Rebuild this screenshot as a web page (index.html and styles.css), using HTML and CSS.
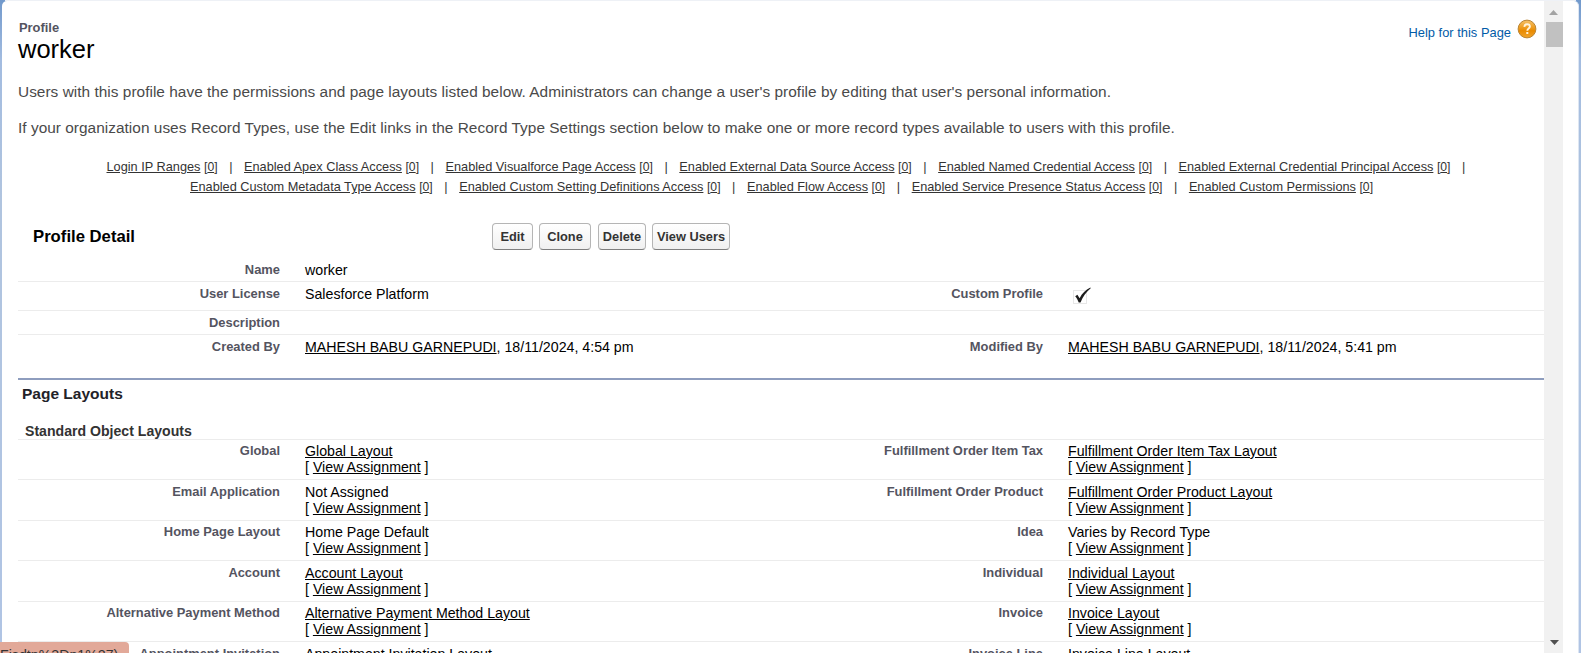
FILE: index.html
```html
<!DOCTYPE html>
<html lang="en">
<head>
<meta charset="utf-8">
<title>Profile: worker</title>
<link rel="stylesheet" href="styles.css">
</head>
<body>
<div class="frame">
  <main class="content">
    <header class="head">
      <div>
        <div class="kind">Profile</div>
        <h1 class="title">worker</h1>
      </div>
      <a class="help"><span>Help for this Page</span>
        <svg width="20" height="20" viewBox="0 0 20 20">
          <defs><linearGradient id="g" x1="0" y1="0" x2="0" y2="1"><stop offset="0" stop-color="#f5c26a"/><stop offset=".45" stop-color="#ee9a1a"/><stop offset=".6" stop-color="#e98a00"/><stop offset="1" stop-color="#f2a52c"/></linearGradient></defs>
          <circle cx="10" cy="10" r="8.9" fill="url(#g)" stroke="#b98434" stroke-width="1"/>
          <path d="M7.300 7.900C7.400 6 8.500 5.200 10.100 5.200c1.600 0 2.800.9 2.800 2.400 0 2-2.600 2-2.600 4.100" fill="none" stroke="#fff4dc" stroke-width="1.900"/>
          <rect x="9.300" y="13" width="2" height="2" fill="#fff4dc"/>
        </svg>
      </a>
    </header>
    <p class="intro">Users with this profile have the permissions and page layouts listed below. Administrators can change a user's profile by editing that user's personal information.</p>
    <p class="intro">If your organization uses Record Types, use the Edit links in the Record Type Settings section below to make one or more record types available to users with this profile.</p>
    <nav class="links">
      <div class="linkrow first">
        <a><u>Login IP Ranges</u> <small>[<u>0</u>]</small></a><i>|</i>
        <a><u>Enabled Apex Class Access</u> <small>[<u>0</u>]</small></a><i>|</i>
        <a><u>Enabled Visualforce Page Access</u> <small>[<u>0</u>]</small></a><i>|</i>
        <a><u>Enabled External Data Source Access</u> <small>[<u>0</u>]</small></a><i>|</i>
        <a><u>Enabled Named Credential Access</u> <small>[<u>0</u>]</small></a><i>|</i>
        <a><u>Enabled External Credential Principal Access</u> <small>[<u>0</u>]</small></a><i>|</i>
      </div>
      <div class="linkrow second">
        <a><u>Enabled Custom Metadata Type Access</u> <small>[<u>0</u>]</small></a><i>|</i>
        <a><u>Enabled Custom Setting Definitions Access</u> <small>[<u>0</u>]</small></a><i>|</i>
        <a><u>Enabled Flow Access</u> <small>[<u>0</u>]</small></a><i>|</i>
        <a><u>Enabled Service Presence Status Access</u> <small>[<u>0</u>]</small></a><i>|</i>
        <a><u>Enabled Custom Permissions</u> <small>[<u>0</u>]</small></a>
      </div>
    </nav>
    <div class="bar">
      <h2 class="bartitle">Profile Detail</h2>
      <button class="btn edit">Edit</button><button class="btn clone">Clone</button><button class="btn delete">Delete</button><button class="btn view">View Users</button>
    </div>
    <section class="detail">
      <div class="row name"><b>Name</b><span>worker</span></div>
      <div class="row license"><b>User License</b><span>Salesforce Platform</span><b>Custom Profile</b><span>
        <svg class="check" width="21" height="18" viewBox="0 0 21 18"><path d="M1.500 3.500h13v13h-13z" fill="none" stroke="#cfcfcf" stroke-dasharray="1 1"/><path d="M3.200 9.200 5.400 7.800 7.600 11.300C10 6.600 13.500 2.800 18.400.6L18.700 1.200C14.200 4.800 10.900 9.400 8.500 15.400L6.700 15.500C5.800 13 4.600 10.800 3.200 9.200z" fill="#1c1c1c"/></svg></span></div>
      <div class="row desc"><b>Description</b></div>
      <div class="row created"><b>Created By</b><span><u>MAHESH BABU GARNEPUDI</u>, 18/11/2024, 4:54 pm</span><b>Modified By</b><span><u>MAHESH BABU GARNEPUDI</u>, 18/11/2024, 5:41 pm</span></div>
    </section>
    <h3 class="section">Page Layouts</h3>
    <h4 class="group">Standard Object Layouts</h4>
    <section class="layouts">
      <div class="row short"><b>Global</b><span><u>Global Layout</u><br>[ <u>View Assignment</u> ]</span><b>Fulfillment Order Item Tax</b><span><u>Fulfillment Order Item Tax Layout</u><br>[ <u>View Assignment</u> ]</span></div>
      <div class="row tall"><b>Email Application</b><span>Not Assigned<br>[ <u>View Assignment</u> ]</span><b>Fulfillment Order Product</b><span><u>Fulfillment Order Product Layout</u><br>[ <u>View Assignment</u> ]</span></div>
      <div class="row short"><b>Home Page Layout</b><span>Home Page Default<br>[ <u>View Assignment</u> ]</span><b>Idea</b><span>Varies by Record Type<br>[ <u>View Assignment</u> ]</span></div>
      <div class="row tall"><b>Account</b><span><u>Account Layout</u><br>[ <u>View Assignment</u> ]</span><b>Individual</b><span><u>Individual Layout</u><br>[ <u>View Assignment</u> ]</span></div>
      <div class="row short"><b>Alternative Payment Method</b><span><u>Alternative Payment Method Layout</u><br>[ <u>View Assignment</u> ]</span><b>Invoice</b><span><u>Invoice Layout</u><br>[ <u>View Assignment</u> ]</span></div>
      <div class="row tall"><b>Appointment Invitation</b><span><u>Appointment Invitation Layout</u></span><b>Invoice Line</b><span><u>Invoice Line Layout</u></span></div>
    </section>
  </main>
  <div class="scroll">
    <svg class="up" width="9" height="5" viewBox="0 0 9 5"><path d="M0 5 4.500 0 9 5z" fill="#a3a3a3"/></svg>
    <div class="thumb"></div>
    <svg class="down" width="9" height="5" viewBox="0 0 9 5"><path d="M0 0h9L4.500 5z" fill="#505050"/></svg>
  </div>
</div>
<div class="status">Fisdtp%3Dp1%27)</div>
</body>
</html>
```
FILE: styles.css
```css
* { box-sizing: border-box; }
body {
  margin: 0;
  height: 653px;
  overflow: hidden;
  padding: 1px 2px 0;
  background: linear-gradient(#eef1f6, #eef1f6) 5px 0 / 1571px 1px no-repeat,
    linear-gradient(#7199cc, #a3bce0 60px, #b0c4df 200px, #b0c4e4);
  font-family: "Liberation Sans", Arial, sans-serif;
  font-size: 14.2px;
  line-height: 16px;
  color: #000;
  position: relative;
}
h1, h2, h3, h4, p { margin: 0; font-weight: normal; }
.frame {
  display: flex;
  height: 652px;
  overflow: hidden;
  background: #fff;
  border-radius: 5px 5px 0 0;
  border-right: 1px solid #dde6f3;
}
.content { width: 1542px; padding: 19px 0 0 16px; white-space: nowrap; }
.head { display: flex; justify-content: space-between; height: 61px; }
.kind { padding-left: 1px; font-size: 12.9px; font-weight: bold; line-height: 15px; color: #54545f; }
.title { font-size: 25.5px; line-height: 29px; }
.help { display: flex; gap: 6px; font-size: 12.9px; line-height: 26px; color: #015ba7; padding-right: 7px; }
.help svg { display: block; margin-top: -1px; }
.intro { font-size: 15.4px; letter-spacing: 0.03px; line-height: 22px; height: 36px; color: #4a4a4a; }
.links { padding-top: 4px; color: #333; font-size: 12.74px; line-height: 20px; }
.linkrow { display: flex; }
.linkrow i { font-style: normal; width: 26.5px; text-align: center; }
.linkrow small { font-size: 12.2px; }
.first { padding-left: 88.5px; }
.second { padding-left: 172px; }
.bar { display: flex; align-items: flex-start; height: 61px; padding-top: 26px; }
.bartitle { width: 474px; padding-left: 15px; font-size: 16.7px; font-weight: bold; line-height: 27px; }
.btn {
  height: 27px;
  padding: 0;
  border: 1px solid #b5b5b5;
  border-bottom-color: #7f7f7f;
  border-radius: 4px;
  background: linear-gradient(#fff, #f0f0f0);
  color: #333;
  font: bold 12.8px/24px "Liberation Sans", Arial, sans-serif;
}
.edit { width: 41px; margin-right: 6px; }
.clone { width: 52px; margin-right: 7px; }
.delete { width: 48px; margin-right: 6px; }
.view { width: 78px; }
.row {
  display: grid;
  grid-template-columns: 262px 475px 288px 1fr;
  border-bottom: 1px solid #ececec;
}
.row b { text-align: right; font-size: 12.92px; line-height: 15px; padding-top: 4px; color: #54545f; }
.row span { padding: 4px 0 0 25px; }
.short { height: 40px; }
.short b, .short span { padding-top: 3px; }
.tall { height: 41px; }
.name { height: 24px; }
.license { height: 29px; }
.desc { height: 24px; }
.created { height: 43px; border: 0; }
.check { display: block; margin: 1px 0 0 4px; }
.section {
  height: 61px;
  border-top: 2px solid #8e9dbe;
  padding: 5px 0 0 4px;
  font-size: 15.5px;
  font-weight: bold;
  line-height: 18px;
  color: #222228;
}
.group {
  margin-top: -16px;
  padding-left: 7px;
  border-bottom: 1px solid #ececec;
  font-size: 14.1px;
  font-weight: bold;
  line-height: 16px;
  color: #333;
}
.scroll { width: 19px; background: #f1f1f1; display: flex; flex-direction: column; align-items: center; }
.up { margin-top: 9px; flex: none; }
.thumb { width: 17px; height: 25px; margin: 7px 0 0 2px; background: #c1c1c1; }
.down { margin: auto 0 8px 2px; flex: none; }
.status {
  position: absolute;
  left: 0;
  top: 642px;
  width: 129px;
  height: 30px;
  padding: 5px 14px 0 0;
  border-radius: 0 4px 0 0;
  background: #e2a999;
  color: #333;
  text-align: right;
}
```
